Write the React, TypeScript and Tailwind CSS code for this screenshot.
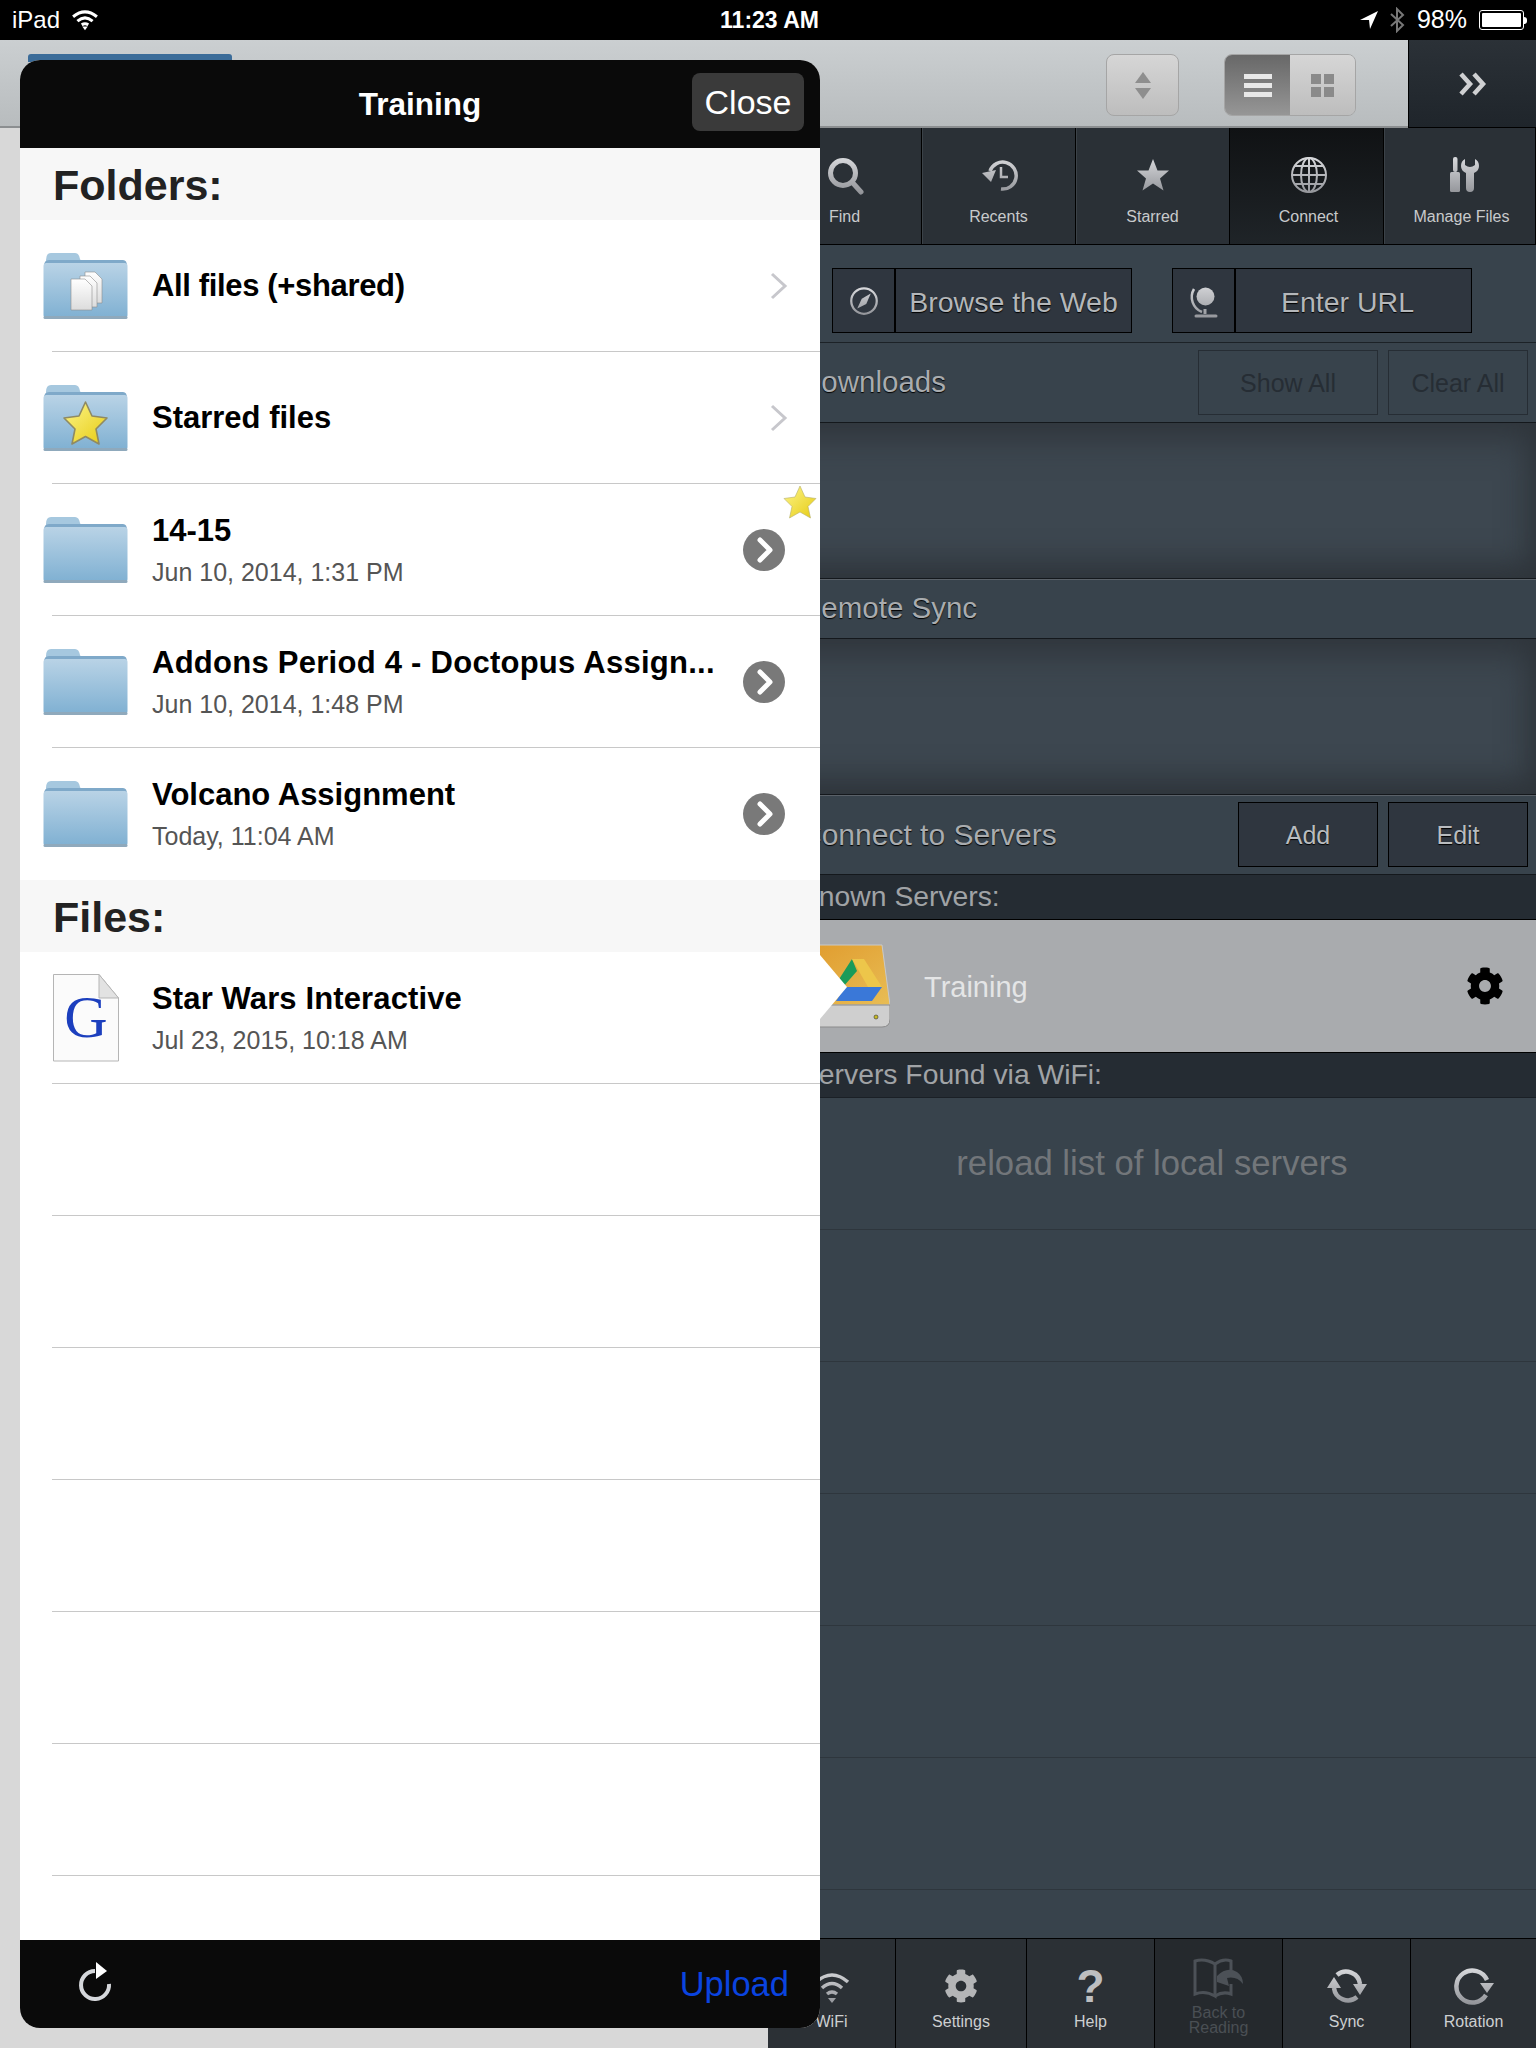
import type { ReactNode } from 'react';
import { FaCog } from 'react-icons/fa';

const folderRows = [
  { title: 'All files (+shared)', badge: 'docs', nav: true, fit: 'tracking-[-0.35px]' },
  { title: 'Starred files', badge: 'star', nav: true },
  { title: '14-15', sub: 'Jun 10, 2014, 1:31 PM' },
  { title: 'Addons Period 4 - Doctopus Assign...', sub: 'Jun 10, 2014, 1:48 PM', fit: 'tracking-[0.26px]' },
  { title: 'Volcano Assignment', sub: 'Today, 11:04 AM' },
];

function Defs() {
  return (
    <svg className="absolute h-0 w-0">
      <defs>
        <linearGradient id="metal" gradientUnits="userSpaceOnUse" x1="0" y1="0" x2="0" y2="40">
          <stop offset="0" stopColor="#dcdde0" />
          <stop offset="1" stopColor="#8f9196" />
        </linearGradient>
        <linearGradient id="folderBody" x1="0" y1="0" x2="0" y2="1">
          <stop offset="0" stopColor="#b9d3e6" />
          <stop offset="1" stopColor="#7fb0d2" />
        </linearGradient>
        <linearGradient id="goldStar" x1="0" y1="0" x2="1" y2="1">
          <stop offset="0" stopColor="#fdf58a" />
          <stop offset="1" stopColor="#e6cb12" />
        </linearGradient>
        <linearGradient id="paper" x1="0" y1="0" x2="0" y2="1">
          <stop offset="0" stopColor="#ffffff" />
          <stop offset="1" stopColor="#dcdcdc" />
        </linearGradient>
        <linearGradient id="driveFace" x1="0" y1="0" x2="1" y2="1">
          <stop offset="0" stopColor="#e09a2c" />
          <stop offset="1" stopColor="#e8bd55" />
        </linearGradient>
      </defs>
    </svg>
  );
}

function Folder({ badge }: { badge?: string }) {
  return (
    <svg viewBox="0 0 85 68" className="h-[68px] w-[85px]">
      <path d="M3 8 Q3 1 8 1 H32 Q36 1 37 7 L38 9 H3 Z" fill="#a6c8df" />
      <path d="M1 14 Q1 8 6 8 H80 Q84 8 84 14 V18 H1 Z" fill="#7fa9c9" />
      <rect x="0.5" y="11" width="84" height="55" rx="3" fill="url(#folderBody)" />
      <rect x="0.5" y="64" width="84" height="3" rx="1.5" fill="#8fa9bc" />
      {badge === 'docs' && (
        <g stroke="#8d8d8d" strokeWidth="0.6" fill="url(#paper)">
          <path d="M42 20 H52 L59 27 V51 H42 Z" />
          <path d="M37 24 H47 L54 31 V55 H37 Z" />
          <path d="M28 27 H42 L49 34 V58 H28 Z" />
        </g>
      )}
      {badge === 'star' && (
        <path
          d="M42.5 18 L49 32 L64 34 L53 45 L56 60 L42.5 52.5 L29 60 L32 45 L21 34 L36 32 Z"
          fill="url(#goldStar)"
          stroke="#8f8a63"
          strokeWidth="1.6"
          strokeLinejoin="round"
        />
      )}
    </svg>
  );
}

function GoogleDoc() {
  return (
    <div className="relative flex h-[88px] w-[66px] items-end justify-center overflow-hidden">
      <svg viewBox="0 0 66 88" className="absolute inset-0 h-full w-full">
        <path d="M0.5 0.5 H46 L65.5 24 V87 H0.5 Z" fill="#fbfbfb" stroke="#b5b5b5" />
        <path d="M46 0.5 V24 H65.5 Z" fill="#e2e2e2" stroke="#b5b5b5" />
      </svg>
      <span className="relative pb-[15px] font-['Liberation_Serif',serif] text-[60px] leading-none text-[#1c3fbe]">G</span>
    </div>
  );
}

function ChevronCircle() {
  return (
    <svg viewBox="0 0 42 42" className="h-[42px] w-[42px]">
      <circle cx="21" cy="21" r="21" fill="#797979" />
      <path d="M17 11 L27 21 L17 31" fill="none" stroke="#fff" strokeWidth="5" strokeLinecap="round" strokeLinejoin="round" />
    </svg>
  );
}

function FolderRow({ title, sub, badge, nav, fit }: { title: string; sub?: string; badge?: string; nav?: boolean; fit?: string }) {
  return (
    <div className="flex h-[132px] flex-col">
      <div className="flex flex-1 items-center pl-[23px]">
        <Folder badge={badge} />
        <div className="ml-6 flex flex-1 flex-col">
          <span className={`text-[31px] leading-[34px] font-bold text-black ${fit ?? ''}`}>{title}</span>
          {sub && <span className="mt-[10px] text-[25px] leading-[28px] text-[#555]">{sub}</span>}
        </div>
        {nav ? (
          <svg viewBox="0 0 18 28" className="mr-8 h-7 w-[18px]">
            <path d="M2 2 L15 14 L2 26" fill="none" stroke="#c7c7cc" strokeWidth="3" />
          </svg>
        ) : (
          <div className="mr-[35px]">
            <ChevronCircle />
          </div>
        )}
      </div>
      {title !== 'Volcano Assignment' && <div className="ml-8 h-px bg-[#c8c8c8]" />}
    </div>
  );
}

function Modal() {
  return (
    <div className="absolute top-[60px] left-5 flex h-[1968px] w-[800px] flex-col overflow-hidden rounded-[20px] bg-white">
      <div className="grid h-[88px] grid-cols-[1fr_auto_1fr] items-center bg-[#0a0a0a] text-white">
        <span />
        <span className="pt-[2px] text-[31.5px] font-bold">Training</span>
        <span className="mr-4 mb-1 flex h-[58px] w-28 items-center justify-center justify-self-end rounded-lg bg-[#3a3a3a] text-[34px]">Close</span>
      </div>
      <div className="relative flex-1">
        <div className="flex h-[72px] items-center bg-[#f7f7f7] pt-[2px] pl-[33px] text-[43px] font-bold text-[#222]">Folders:</div>
        {folderRows.map((r) => (
          <FolderRow key={r.title} {...r} />
        ))}
        <div className="flex h-[72px] items-center bg-[#f7f7f7] pt-[2px] pl-[33px] text-[43px] font-bold text-[#222]">Files:</div>
        <div className="flex h-[132px] flex-col">
          <div className="flex flex-1 items-center pl-[33px]">
            <GoogleDoc />
            <div className="ml-[33px] flex flex-col">
              <span className="text-[31px] leading-[34px] font-bold tracking-[0.13px] text-black">Star Wars Interactive</span>
              <span className="mt-[10px] text-[25px] leading-[28px] text-[#555]">Jul 23, 2015, 10:18 AM</span>
            </div>
          </div>
          <div className="ml-8 h-px bg-[#c8c8c8]" />
        </div>
        {[0, 1, 2, 3, 4, 5].map((i) => (
          <div key={i} className="flex h-[132px] flex-col justify-end">
            <div className="ml-8 h-px bg-[#c8c8c8]" />
          </div>
        ))}
        {/* favourite marker sits on the 14-15 row */}
        <svg viewBox="0 0 34 34" className="absolute top-[337px] right-[3px] h-[34px] w-[34px]">
          <path d="M17 1 L22 12 L33 13.5 L25 21.5 L27.5 33 L17 27 L6.5 33 L9 21.5 L1 13.5 L12 12 Z" fill="url(#goldStar)" stroke="#b5ae6a" strokeWidth="0.6" />
        </svg>
      </div>
      <div className="flex h-[88px] items-center justify-between bg-[#0a0a0a] pr-[31px] pl-[57px]">
        <svg viewBox="0 0 40 44" className="mb-1 h-11 w-10">
          <path d="M32 24 A14 14 0 1 1 18 11" fill="none" stroke="#d5d7db" strokeWidth="4" />
          <path d="M19 2 L30 11 L19 19 Z" fill="#fff" />
        </svg>
        <span className="pt-[2px] text-[34.5px] text-[#0a44e0]">Upload</span>
      </div>
    </div>
  );
}

function Glyph({ children, size = 'h-10 w-10' }: { children: ReactNode; size?: string }) {
  return (
    <svg viewBox="0 0 40 40" className={size} fill="none">
      {children}
    </svg>
  );
}

const M = 'url(#metal)';

const topTabs: { label: string; width: string; nudge?: string; active?: boolean; icon: ReactNode }[] = [
  {
    label: 'Find',
    width: 'w-[154px]',
    icon: (
      <Glyph>
        <circle cx="18" cy="18" r="12.5" stroke={M} strokeWidth="5" />
        <path d="M27 27 L36 37" stroke={M} strokeWidth="5" strokeLinecap="round" />
      </Glyph>
    ),
  },
  {
    label: 'Recents',
    width: 'w-[154px]',
    icon: (
      <Glyph>
        <path d="M11 16 A13.5 13.5 0 1 1 22 34" stroke={M} strokeWidth="3.5" />
        <path d="M3 18 L17 15 L12 27 Z" fill={M} />
        <path d="M22 12 V22 H29" stroke={M} strokeWidth="2.5" />
      </Glyph>
    ),
  },
  {
    label: 'Starred',
    width: 'w-[154px]',
    icon: (
      <Glyph>
        <path d="M20 4 L24.5 15.5 L36 15.5 L27 23.5 L30.5 35.5 L20 28.5 L9.5 35.5 L13 23.5 L4 15.5 L15.5 15.5 Z" fill={M} />
      </Glyph>
    ),
  },
  {
    label: 'Connect',
    width: 'w-[154px]',
    nudge: 'pl-[4px]',
    active: true,
    icon: (
      <Glyph>
        <circle cx="20" cy="20" r="17" stroke={M} strokeWidth="2" />
        <ellipse cx="20" cy="20" rx="8" ry="17" stroke={M} strokeWidth="2" />
        <path d="M20 3 V37 M3 20 H37 M6 11 H34 M6 29 H34" stroke={M} strokeWidth="2" />
      </Glyph>
    ),
  },
  {
    label: 'Manage Files',
    width: 'w-[152px]',
    nudge: 'pl-[4px]',
    icon: (
      <Glyph>
        <rect x="11" y="2" width="4.5" height="15" rx="2" fill={M} />
        <rect x="8" y="17" width="10" height="20" rx="1.5" fill={M} />
        <path d="M23 4 V10 Q28 14 33 10 V4 Q37 6 37 11 Q37 16 32 18 V33 Q32 37 28 37 Q24 37 24 33 V18 Q19 16 19 11 Q19 6 23 4 Z" fill={M} />
      </Glyph>
    ),
  },
];

const bottomTabs: { label: string; width: string; dim?: boolean; icon: ReactNode }[] = [
  {
    label: 'WiFi',
    width: 'w-[128px]',
    icon: (
      <Glyph>
        <path d="M4 16 Q20 2 36 16 M10 22 Q20 13 30 22 M15 28 Q20 24 25 28" stroke={M} strokeWidth="3.5" />
        <path d="M16 32 H24 L20 37 Z" fill={M} />
      </Glyph>
    ),
  },
  { label: 'Settings', width: 'w-[131px]', icon: <FaCog className="h-[34px] w-[34px] text-[#b4b5b7]" /> },
  {
    label: 'Help',
    width: 'w-[128px]',
    icon: <span className="text-[46px] leading-10 font-bold text-[#bdbec0]">?</span>,
  },
  {
    label: 'Back to Reading',
    width: 'w-[128px]',
    dim: true,
    icon: (
      <svg viewBox="0 0 52 44" className="h-11 w-[52px]" fill="none">
        <path d="M2 3 Q12 0 22 6 V38 Q12 32 2 36 Z" stroke="#4c5157" strokeWidth="3" />
        <path d="M22 6 Q30 0 38 3 V14 M38 26 V36 Q30 33 22 38" stroke="#4c5157" strokeWidth="3" />
        <path d="M24 18 Q34 8 44 14 Q50 18 50 26 Q44 18 34 20 L36 28 L24 24 Z" fill="#4c5157" />
      </svg>
    ),
  },
  {
    label: 'Sync',
    width: 'w-[128px]',
    icon: (
      <Glyph>
        <path d="M10 9 A14 14 0 0 1 33 18" stroke={M} strokeWidth="4.5" />
        <path d="M7 22 A14 14 0 0 0 30 31" stroke={M} strokeWidth="4.5" />
        <path d="M26 18 H40 L33 29 Z M0 22 L14 22 L7 11 Z" fill={M} />
      </Glyph>
    ),
  },
  {
    label: 'Rotation',
    width: 'w-[125px]',
    icon: (
      <Glyph>
        <path d="M33 14 A16 16 0 1 0 32 29" stroke={M} strokeWidth="4.5" />
        <path d="M26 17 H40 L33 27 Z" fill={M} />
      </Glyph>
    ),
  },
];

function PanelButton({ label, className, dim }: { label: string; className: string; dim?: boolean }) {
  return (
    <div
      className={`flex h-[65px] items-center justify-center border pt-[2px] text-[25px] ${className} ${
        dim ? 'border-[#262d34] text-[#262d34]' : 'border-black bg-[#2f363f] text-[#b9bcbf] [text-shadow:0_1px_1px_#000]'
      }`}
    >
      {label}
    </div>
  );
}

function IconButton({ label, icon, className, labelClass }: { label: string; icon: ReactNode; className: string; labelClass?: string }) {
  return (
    <div className={`flex h-[65px] border border-black bg-[#2f363f] ${className}`}>
      <div className="flex w-[63px] items-center justify-center border-r-2 border-black">{icon}</div>
      <div className={`flex flex-1 items-center justify-center pt-1 text-[28.5px] text-[#b4b7ba] [text-shadow:0_1px_1px_#000] ${labelClass ?? ''}`}>{label}</div>
    </div>
  );
}

const emptyArea = 'h-[155px] bg-[#3d4750] shadow-[inset_0_14px_36px_#2f353b,inset_0_-14px_30px_#2f353b]';
const headerText = 'pl-8 text-[29.5px] text-[#a9acaf] [text-shadow:0_1px_1px_#000]';

function RightPanel() {
  return (
    <div className="flex w-[768px] flex-col bg-[#38434c]">
      <div className="flex h-[117px] border-b border-black bg-[#2a3036]">
        {topTabs.map((t) => (
          <div
            key={t.label}
            className={`flex ${t.width} flex-col items-center border-r border-black pt-[27px] ${t.nudge ?? ''} ${
              t.active ? 'bg-gradient-to-b from-[#101214] to-[#1f2428]' : 'shadow-[inset_1px_0_0_#3b4248]'
            }`}
          >
            {t.icon}
            <span className="mt-[12px] text-[16px] leading-5 text-[#c8cacc]">{t.label}</span>
          </div>
        ))}
      </div>

      <div className="flex h-[98px] gap-[40px] border-b border-[#1c2227] pt-[23px] pl-16">
        <IconButton
          label="Browse the Web"
          className="w-[300px]"
          icon={
            <Glyph size="h-[30px] w-[30px]">
              <circle cx="20" cy="20" r="17" stroke={M} strokeWidth="3" />
              <path d="M29 10 L23 24 L11 30 L17 17 Z" fill={M} />
            </Glyph>
          }
        />
        <IconButton
          label="Enter URL"
          className="w-[300px]"
          labelClass="pr-3"
          icon={
            <Glyph size="h-10 w-10">
              <circle cx="21.5" cy="15.5" r="9" fill={M} />
              <path d="M10 8 A16 16 0 0 0 18 31" stroke={M} strokeWidth="2.5" />
              <path d="M21 28 V33" stroke={M} strokeWidth="3" />
              <path d="M12 35 H32" stroke={M} strokeWidth="3" strokeLinecap="round" />
            </Glyph>
          }
        />
      </div>

      <div className="flex h-[80px] items-center justify-between border-b border-[#14181c] pr-2">
        <span className={headerText}>Downloads</span>
        <div className="flex gap-[10px]">
          <PanelButton label="Show All" className="w-[180px]" dim />
          <PanelButton label="Clear All" className="w-[140px]" dim />
        </div>
      </div>
      <div className={emptyArea} />

      <div className="flex h-[61px] items-center border-y border-[#14181c] shadow-[inset_0_1px_0_#5a6168]">
        <span className={headerText}>Remote Sync</span>
      </div>
      <div className={emptyArea} />

      <div className="flex h-[81px] items-center justify-between border-y border-[#14181c] pr-2 shadow-[inset_0_1px_0_#5a6168]">
        <span className={`${headerText} text-[30px]`}>Connect to Servers</span>
        <div className="flex gap-[10px]">
          <PanelButton label="Add" className="w-[140px]" />
          <PanelButton label="Edit" className="w-[140px]" />
        </div>
      </div>

      <div className="flex h-[45px] items-center border-b border-black bg-[#252c33] pb-[2px] pl-8 text-[28.3px] text-[#a0a3a6]">Known Servers:</div>

      <div className="flex h-[133px] items-center justify-between border-b border-black bg-[#a9abae] pr-8 pl-8">
        <div className="flex items-center gap-[34px]">
          <svg viewBox="0 0 90 86" className="h-[86px] w-[90px]">
            <path d="M6 2 H82 L90 62 H0 Z" fill="url(#driveFace)" stroke="#c9c9c9" />
            <path d="M0 62 H90 V76 Q90 84 82 84 H8 Q0 84 0 76 Z" fill="#cfcfcf" stroke="#8b8b8b" />
            <circle cx="76" cy="74" r="2" fill="#c9bb22" stroke="#333" strokeWidth="0.6" />
            <path d="M52 16 L34 44 L43 44 L57 28 Z" fill="#1a9b59" />
            <path d="M52 16 L64 16 L82 44 L68 44 Z" fill="#edc64a" />
            <path d="M45 44 H82 L72 58 H36 Z" fill="#3a78d8" />
          </svg>
          <span className="pt-[3px] text-[29px] text-[#e4e5e6]">Training</span>
        </div>
        <FaCog className="h-[38px] w-[38px] text-black" />
      </div>

      <div className="flex h-[45px] items-center border-b border-[#1a2026] bg-[#252c33] pb-[2px] pl-8 text-[28.3px] text-[#a0a3a6]">Servers Found via WiFi:</div>

      <div className="flex flex-1 flex-col overflow-hidden">
        <div className="flex h-[132px] shrink-0 items-center justify-center border-b border-[#2e363d] text-[34.7px] text-[#72767a]">reload list of local servers</div>
        {[0, 1, 2, 3, 4].map((i) => (
          <div key={i} className="h-[132px] shrink-0 border-b border-[#2e363d]" />
        ))}
      </div>

      <div className="flex h-[110px] border-t border-black bg-[#2b3035]">
        {bottomTabs.map((t) => (
          <div
            key={t.label}
            className={`flex ${t.width} flex-col items-center border-r border-black last:border-r-0 ${t.dim ? 'bg-[#25292d] pt-[21px]' : 'pt-[27px]'}`}
          >
            <div className="flex h-10 items-center justify-center">{t.icon}</div>
            <span
              className={`text-center text-[16px] ${
                t.dim ? 'mt-[5px] w-[70px] leading-[15px] text-[#4a4f54]' : 'mt-[6px] leading-5 text-[#cdcfd1]'
              }`}
            >
              {t.label}
            </span>
          </div>
        ))}
      </div>
    </div>
  );
}

export default function App() {
  return (
    <div className="relative flex h-[2048px] w-[1536px] flex-col overflow-hidden bg-[#d8d8d8] font-['Liberation_Sans',Arial,sans-serif]">
      <Defs />

      {/* status bar */}
      <div className="grid h-10 grid-cols-3 items-center bg-black pr-[9px] pl-3 text-white">
        <div className="flex items-center gap-3 text-[24px]">
          iPad
          <svg viewBox="0 0 24 20" className="h-[22px] w-[26px]" fill="none" stroke="#fff" strokeWidth="2.8">
            <path d="M1 7 Q12 -2 23 7 M5 11 Q12 5 19 11 M9 14.5 Q12 12.5 15 14.5" />
            <path d="M9.5 16 H14.5 L12 19.5 Z" fill="#fff" stroke="none" />
          </svg>
        </div>
        <div className="text-center text-[23px] font-bold">11:23 AM</div>
        <div className="flex items-center justify-end gap-3 text-[25px]">
          <svg viewBox="0 0 18 18" className="mr-[-1px] h-[18px] w-[18px]">
            <path d="M18 0 L0 9 L9 9 L10 18 Z" fill="#fff" />
          </svg>
          <svg viewBox="0 0 14 26" className="h-[26px] w-4" fill="none" stroke="#777" strokeWidth="2">
            <path d="M1 7 L13 18 L7 24 V2 L13 8 L1 19" />
          </svg>
          <span>98%</span>
          <div className="flex items-center">
            <div className="h-[20px] w-[45px] rounded-[3px] border border-white p-[2px]">
              <div className="h-full w-full rounded-[1px] bg-white" />
            </div>
            <div className="h-[7px] w-[3px] rounded-r-sm bg-white" />
          </div>
        </div>
      </div>

      {/* top toolbar */}
      <div className="flex h-[88px]">
        <div className="flex flex-1 items-center justify-end gap-[45px] border-b-2 border-[#8b8e90] bg-gradient-to-b from-[#cbcfd1] to-[#b8bcbe] pt-1 pr-[52px]">
          <div className="flex h-[62px] w-[73px] flex-col items-center justify-center gap-[5px] rounded-lg border border-[#a5a5a5] bg-gradient-to-b from-[#d6d6d6] to-[#bdbdbd]">
            <div className="h-0 w-0 border-x-[8px] border-b-[11px] border-x-transparent border-b-[#8e8e8e]" />
            <div className="h-0 w-0 border-x-[8px] border-t-[11px] border-x-transparent border-t-[#8e8e8e]" />
          </div>
          <div className="flex h-[62px] w-[132px] overflow-hidden rounded-lg border border-[#a5a5a5]">
            <div className="flex w-[65px] flex-col items-center justify-center gap-[4px] bg-gradient-to-b from-[#686868] to-[#969696]">
              <div className="h-[5px] w-7 bg-[#e8e8e8]" />
              <div className="h-[5px] w-7 bg-[#e8e8e8]" />
              <div className="h-[5px] w-7 bg-[#e8e8e8]" />
            </div>
            <div className="flex flex-1 items-center justify-center bg-gradient-to-b from-[#d6d6d6] to-[#bdbdbd]">
              <div className="grid grid-cols-2 gap-[3px]">
                <div className="h-[10px] w-[10px] bg-[#8a8a8a]" />
                <div className="h-[10px] w-[10px] bg-[#8a8a8a]" />
                <div className="h-[10px] w-[10px] bg-[#8a8a8a]" />
                <div className="h-[10px] w-[10px] bg-[#8a8a8a]" />
              </div>
            </div>
          </div>
        </div>
        <div className="flex w-32 items-center justify-center border-b border-l border-black bg-gradient-to-b from-[#2b3137] to-[#1f252b]">
          <svg viewBox="0 0 30 24" className="h-6 w-[30px]" fill="none" stroke="#cfd0d2" strokeWidth="4.5">
            <path d="M3 2 L12 12 L3 22 M16 2 L25 12 L16 22" />
          </svg>
        </div>
      </div>

      <div className="flex flex-1">
        <div className="w-[768px]" />
        <RightPanel />
      </div>

      {/* blue tab peeking out above the sheet */}
      <div className="absolute top-[54px] left-7 h-[8px] w-[204px] rounded-t-[3px] bg-[#3b6c99]" />

      <Modal />

      {/* popover pointer over the selected server */}
      <div className="absolute top-[955px] left-[820px] h-0 w-0 border-y-[32px] border-l-[27px] border-y-transparent border-l-white" />
    </div>
  );
}
